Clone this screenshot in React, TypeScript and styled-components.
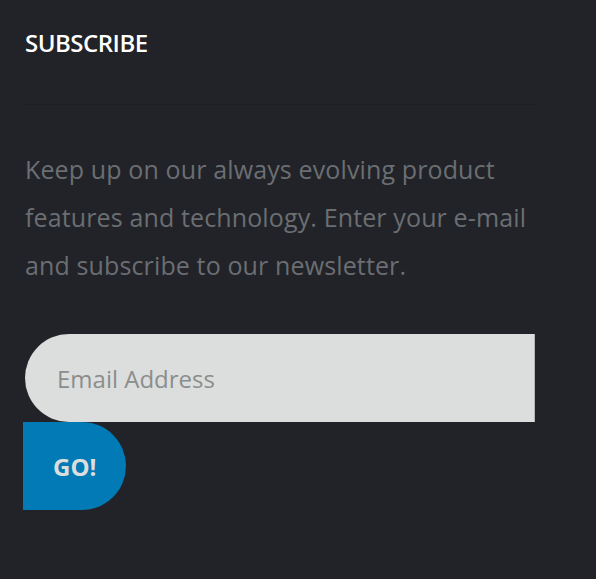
import React from "react";
import styled, { createGlobalStyle } from "styled-components";

const GlobalStyle = createGlobalStyle`
  html, body {
    margin: 0;
    padding: 0;
    background: #212328;
  }
  body {
    font-family: "Open Sans", "Liberation Sans", sans-serif;
  }
`;

const Section = styled.section`
  width: 596px;
  min-height: 579px;
  box-sizing: border-box;
  padding: 28px 25px 0 25px;
  background: #212328;
`;

const Title = styled.h3`
  margin: 0;
  font-size: 24px;
  line-height: 30px;
  font-weight: 600;
  letter-spacing: -0.5px;
  color: #ffffff;
  text-transform: uppercase;
`;

const Divider = styled.hr`
  width: 510px;
  height: 1px;
  margin: 46px 0 40px 0;
  border: 0;
  background: #1c1e22;
`;

const Intro = styled.p`
  margin: 0;
  width: 510px;
  font-size: 25px;
  line-height: 48px;
  letter-spacing: 0.13px;
  color: #6b6e72;
`;

const Form = styled.form`
  display: flex;
  flex-direction: column;
  margin-top: 45px;
`;

const EmailInput = styled.input`
  width: 510px;
  height: 88px;
  box-sizing: border-box;
  padding: 0 0 0 32px;
  border: 0;
  border-right: 1px solid #b3b5b5;
  border-radius: 44px 0 0 44px;
  background: #dcdedd;
  font-family: "Open Sans", "Liberation Sans", sans-serif;
  font-size: 24px;
  color: #555;
  outline: none;

  &::placeholder {
    color: #8b8d8d;
  }
`;

const GoButton = styled.button`
  width: 103px;
  height: 88px;
  margin-left: -2px;
  padding: 0 0 0 30px;
  border: 0;
  border-radius: 0 44px 44px 0;
  background: #017ab5;
  color: #dcdedd;
  font-family: "Open Sans", "Liberation Sans", sans-serif;
  font-size: 24px;
  font-weight: 700;
  text-align: left;
  cursor: pointer;
`;

export default function App() {
  return (
    <>
      <GlobalStyle />
      <Section>
        <Title>Subscribe</Title>
        <Divider />
        <Intro>
          Keep up on our always evolving product features and technology. Enter
          your e-mail and subscribe to our newsletter.
        </Intro>
        <Form onSubmit={(e) => e.preventDefault()}>
          <EmailInput type="email" placeholder="Email Address" />
          <GoButton type="submit">GO!</GoButton>
        </Form>
      </Section>
    </>
  );
}
